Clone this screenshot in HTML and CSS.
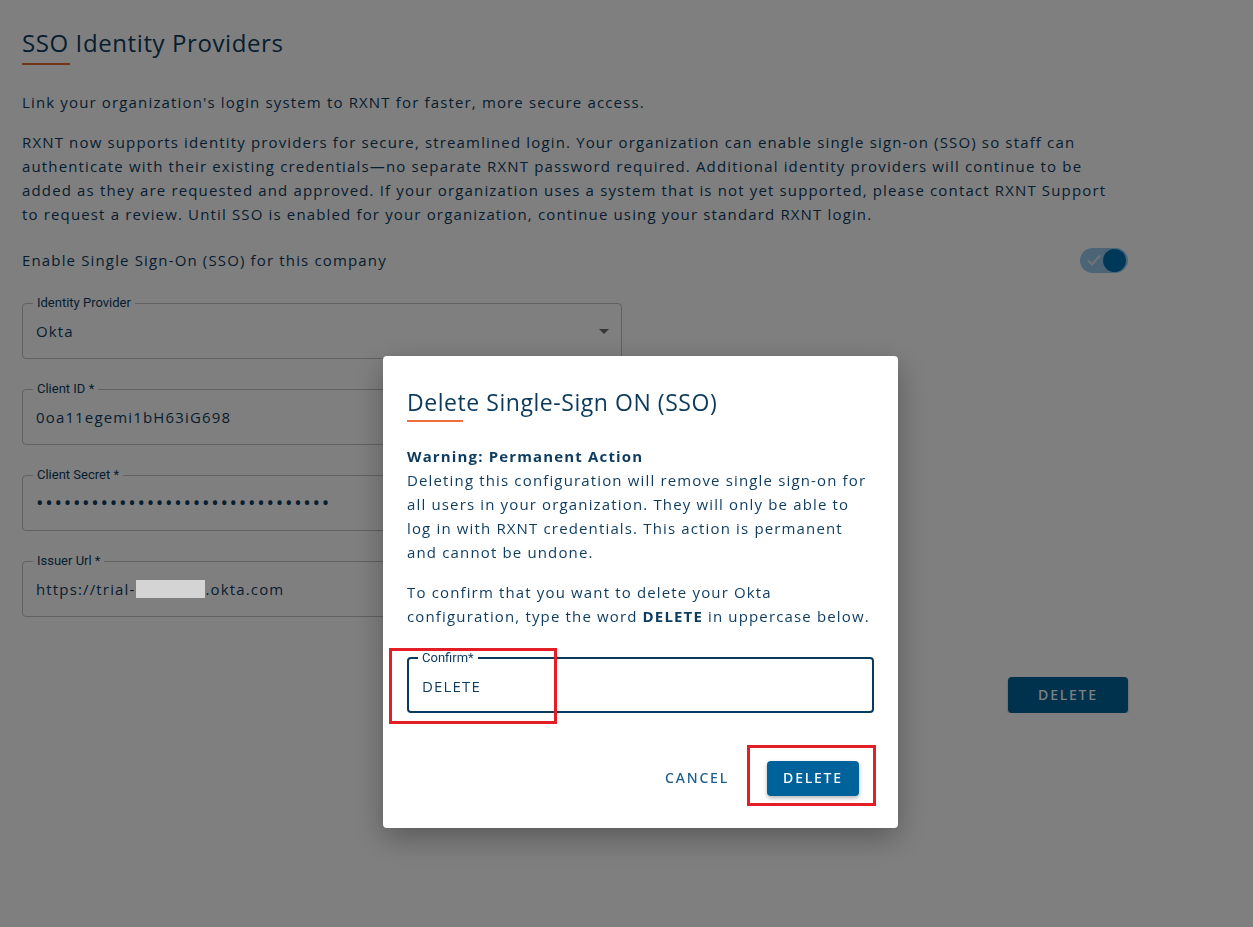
FILE: index.html
```html
<!DOCTYPE html>
<html lang="en">
<head>
<meta charset="UTF-8">
<meta name="viewport" content="width=device-width, initial-scale=1.0">
<title>SSO Identity Providers</title>
<link rel="stylesheet" href="styles.css">
</head>
<body>
<main class="page">
    <h2 class="page-title">SSO Identity Providers</h2>
    <p class="lead">Link your organization's login system to RXNT for faster, more secure access.</p>
    <p class="desc">RXNT now supports identity providers for secure, streamlined login. Your organization can enable single sign-on (SSO) so staff can authenticate with their existing credentials—no separate RXNT password required. Additional identity providers will continue to be added as they are requested and approved. If your organization uses a system that is not yet supported, please contact RXNT Support to request a review. Until SSO is enabled for your organization, continue using your standard RXNT login.</p>

    <div class="switch-row">
        <span>Enable Single Sign-On (SSO) for this company</span>
        <span class="switch">
            <svg class="switch-check" width="16" height="12" viewBox="0 0 16 12"><path d="M2 6.5l4 4 8-9" fill="none" stroke="currentColor" stroke-width="2"/></svg>
            <span class="switch-thumb"></span>
        </span>
    </div>

    <div class="fields">
        <fieldset class="field">
            <legend>Identity Provider</legend>
            <div class="value select">Okta <span class="caret"></span></div>
        </fieldset>
        <fieldset class="field">
            <legend>Client ID *</legend>
            <div class="value">0oa11egemi1bH63iG698</div>
        </fieldset>
        <fieldset class="field">
            <legend>Client Secret *</legend>
            <div class="value dots">••••••••••••••••••••••••••••••••</div>
        </fieldset>
        <fieldset class="field">
            <legend>Issuer Url *</legend>
            <div class="value">https://trial-<span class="redact"></span>.okta.com</div>
        </fieldset>
    </div>

    <div class="actions">
        <button class="btn btn-primary">DELETE</button>
    </div>
</main>

<div class="backdrop"></div>

<div class="dialog">
    <h3 class="dialog-title">Delete Single-Sign ON (SSO)</h3>
    <p class="dialog-text"><strong>Warning: Permanent Action</strong><br>Deleting this configuration will remove single sign-on for all users in your organization. They will only be able to log in with RXNT credentials. This action is permanent and cannot be undone.</p>
    <p class="dialog-text">To confirm that you want to delete your Okta configuration, type the word <strong>DELETE</strong> in uppercase below.</p>
    <fieldset class="field field-focus">
        <legend>Confirm*</legend>
        <div class="value">DELETE</div>
    </fieldset>
    <div class="dialog-actions">
        <button class="btn btn-text">CANCEL</button>
        <button class="btn btn-primary btn-raised">DELETE</button>
    </div>
    <span class="mark mark-input"></span>
    <span class="mark mark-button"></span>
</div>
</body>
</html>
```

FILE: styles.css
```css
body {
    margin: 0;
    background: #fff;
    color: #0d3c5f;
    font-family: "Open Sans", "Noto Sans", sans-serif;
}
p {
    margin: 0;
}
.page {
    width: 1106px;
    padding: 28px 0 0 22px;
    font-size: 15px;
    line-height: 24px;
    letter-spacing: 1.15px;
}
.page-title {
    margin: 0;
    font-size: 24px;
    font-weight: 400;
    line-height: 30px;
    letter-spacing: 0.6px;
}
.page-title::after,
.dialog-title::after {
    content: "";
    display: block;
    width: 48px;
    height: 2px;
    margin-top: 5px;
    background: #e4672f;
}
.lead {
    margin-top: 25px;
}
.desc {
    margin-top: 16px;
    max-width: 1100px;
}
.switch-row {
    display: flex;
    align-items: center;
    justify-content: space-between;
    margin-top: 22px;
    height: 24px;
}
.switch {
    position: relative;
    display: flex;
    align-items: center;
    width: 48px;
    height: 25px;
    border-radius: 13px;
    background: #96cbee;
}
.switch-check {
    margin-left: 6px;
    color: #dfe7ee;
}
.switch-thumb {
    position: absolute;
    right: 2px;
    top: 1px;
    width: 23px;
    height: 23px;
    border-radius: 50%;
    background: #0070b5;
}
.fields {
    display: flex;
    flex-direction: column;
    gap: 23px;
    margin-top: 24px;
    width: 600px;
}
.field {
    margin: 0;
    padding: 0 13px;
    border: 1px solid #c2c2c2;
    border-radius: 4px;
    height: 63px;
    box-sizing: border-box;
}
.field legend {
    padding: 0 4px;
    margin-left: -3px;
    font: 13px/14px Roboto, sans-serif;
    letter-spacing: 0;
    color: #0d3c5f;
}
.value {
    display: flex;
    align-items: center;
    height: 40px;
    margin-top: 1px;
    font-size: 15px;
}
.select {
    justify-content: space-between;
}
.caret {
    width: 0;
    height: 0;
    margin-right: -1px;
    border-left: 5px solid transparent;
    border-right: 5px solid transparent;
    border-top: 5px solid #6d6d6d;
}
.dots {
    font-size: 20px;
    letter-spacing: 1.7px;
}
.redact {
    position: relative;
    z-index: 20;
    display: inline-block;
    width: 69px;
    height: 18px;
    margin-left: 1px;
    background: #d4d4d4;
}
.actions {
    display: flex;
    justify-content: flex-end;
    margin-top: 60px;
}
.btn {
    border: 0;
    border-radius: 4px;
    font: 500 14px/20px "Noto Sans", "Open Sans", sans-serif;
    letter-spacing: 1.8px;
    cursor: pointer;
}
.btn-primary {
    width: 120px;
    height: 36px;
    color: #fff;
    background: #00629b;
    box-shadow: 0 2px 3px rgba(0, 0, 0, .25);
}
.btn-text {
    padding: 0 8px;
    height: 36px;
    color: #1b5f8e;
    background: none;
}
.backdrop {
    position: fixed;
    inset: 0;
    z-index: 10;
    background: rgba(0, 0, 0, .5);
}
.dialog {
    position: fixed;
    left: 383px;
    top: 356px;
    z-index: 30;
    width: 515px;
    height: 472px;
    box-sizing: border-box;
    padding: 31px 24px 0;
    background: #fff;
    border-radius: 4px;
    box-shadow: 0 10px 30px rgba(0, 0, 0, .3);
    font-size: 15px;
    line-height: 24px;
    letter-spacing: 1.15px;
}
.dialog-title {
    margin: 0 0 22px;
    font-size: 23px;
    font-weight: 400;
    line-height: 30px;
    letter-spacing: 0.55px;
    color: #0b3a5c;
}
.dialog-title::after {
    width: 56px;
    margin-top: 3px;
    background: #f26d3d;
}
.dialog-text + .dialog-text {
    margin-top: 16px;
}
.dialog-text strong {
    font-weight: 700;
}
.field-focus {
    margin-top: 23px;
    height: 62px;
    border: 2px solid #0b3a5c;
}
.field-focus legend {
    margin-left: -4px;
}
.dialog-actions {
    display: flex;
    justify-content: flex-end;
    align-items: center;
    gap: 30px;
    margin: 47px 15px 0 0;
}
.btn-raised {
    width: 92px;
    height: 35px;
    box-shadow: 0 2px 4px rgba(0, 0, 0, .3);
}
.mark {
    position: absolute;
    border: 3px solid #e31e24;
    box-sizing: border-box;
}
.mark-input {
    left: 6px;
    top: 292px;
    width: 168px;
    height: 76px;
}
.mark-button {
    left: 364px;
    top: 389px;
    width: 129px;
    height: 61px;
}
```
